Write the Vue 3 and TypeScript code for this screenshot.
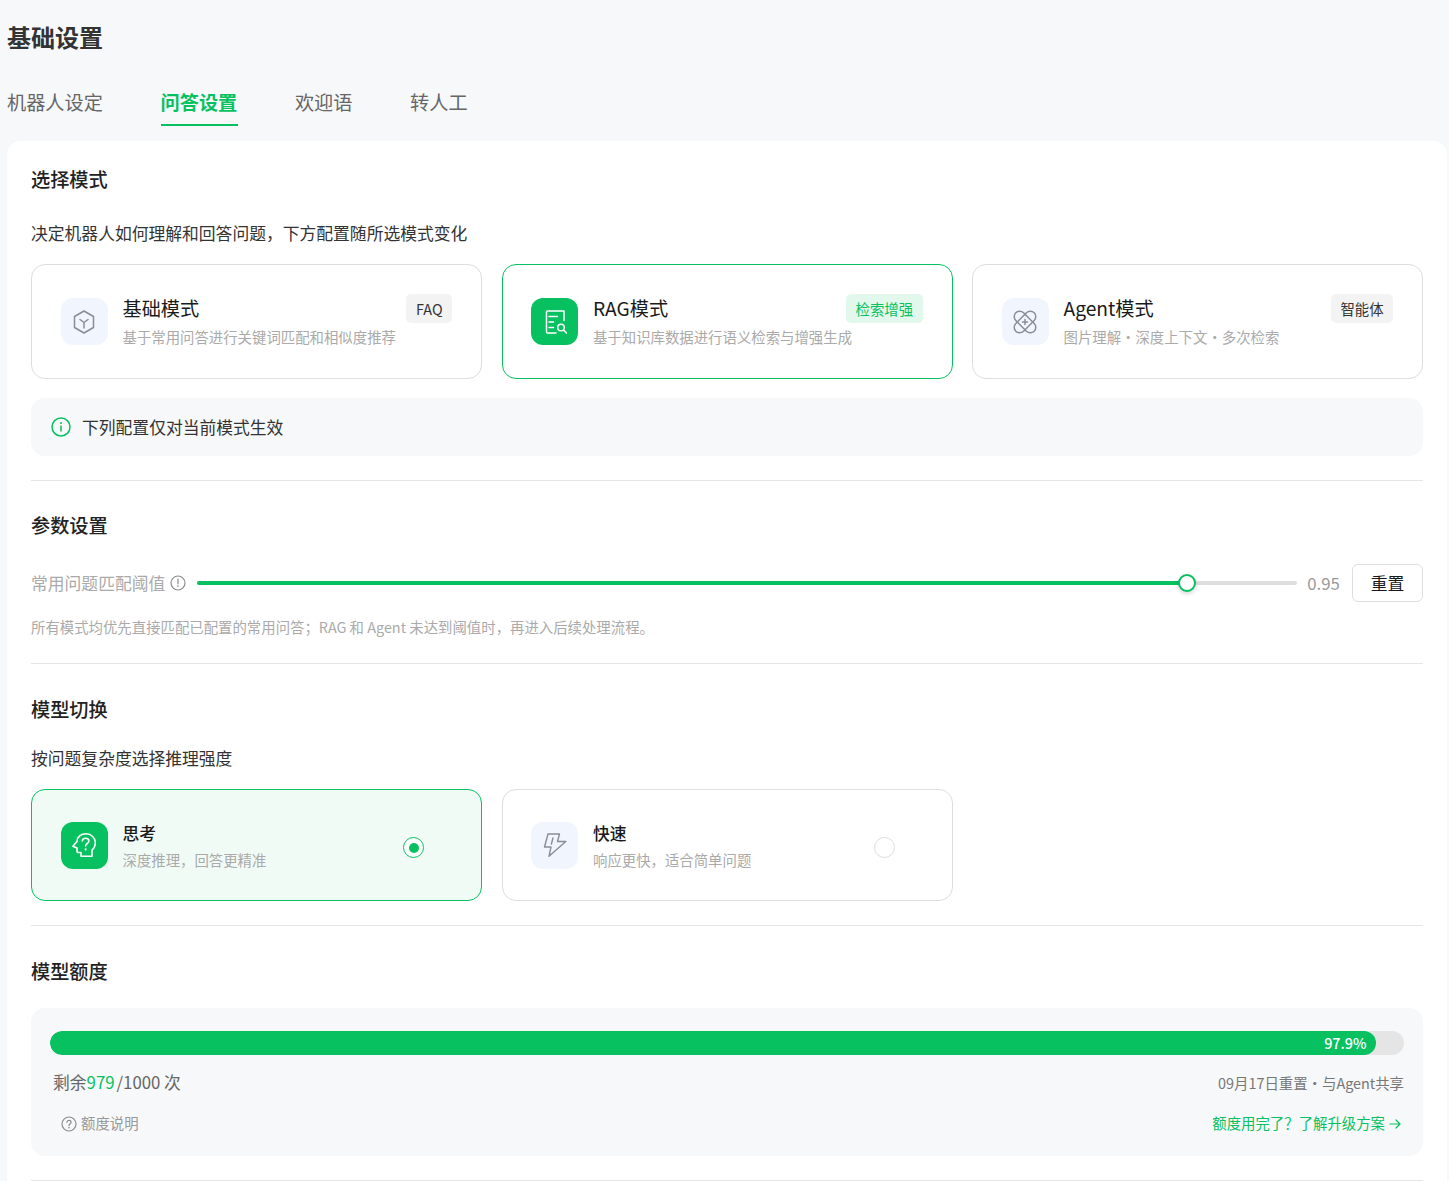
<script setup lang="ts">
const tabs = ["机器人设定", "问答设置", "欢迎语", "转人工"];

const modes = [
  { key: "basic", title: "基础模式", desc: "基于常用问答进行关键词匹配和相似度推荐", tag: "FAQ", active: false },
  { key: "rag", title: "RAG模式", desc: "基于知识库数据进行语义检索与增强生成", tag: "检索增强", active: true },
  { key: "agent", title: "Agent模式", desc: "图片理解・深度上下文・多次检索", tag: "智能体", active: false },
];

const models = [
  { key: "think", title: "思考", desc: "深度推理，回答更精准", active: true },
  { key: "fast", title: "快速", desc: "响应更快，适合简单问题", active: false },
];

const threshold = 0.95;
const used = 97.9;
</script>

<template>
  <div class="page">
    <h1 class="page-title">基础设置</h1>
    <nav class="tabs">
      <span v-for="(t, i) in tabs" :key="t" class="tab" :class="{ on: i === 1 }">{{ t }}</span>
    </nav>

    <main class="panel">
      <section class="sec first">
        <h2>选择模式</h2>
        <p class="lead">决定机器人如何理解和回答问题，下方配置随所选模式变化</p>
        <div class="mode-grid">
          <div v-for="m in modes" :key="m.key" class="mode" :class="{ on: m.active }">
            <div class="ico">
              <svg v-if="m.key === 'basic'" viewBox="0 0 24 24" width="24" height="24" fill="none" stroke="currentColor" stroke-width="1.5" stroke-linejoin="round" stroke-linecap="round">
                <path d="M12 1 21.500 6.500v11L12 23l-9.500-5.500v-11z" />
                <path d="M8 9.500l4 3 4-3M12 12.500V18" />
              </svg>
              <svg v-else-if="m.key === 'rag'" viewBox="0 0 24 24" width="24" height="24" fill="none" stroke="currentColor" stroke-width="1.500" stroke-linejoin="round" stroke-linecap="round">
                <path d="M21 10.500V1H4.500a1 1 0 0 0-1 1v20a1 1 0 0 0 1 1H13" />
                <path d="M6 6.500h8.500M6 12h4.500M6 17.500h4.500" />
                <circle cx="18" cy="17.500" r="3.300" />
                <path d="m20.500 20 3 3" />
              </svg>
              <svg v-else viewBox="0 0 24 24" width="24" height="24" fill="none" stroke="currentColor" stroke-width="1.500" stroke-linejoin="round" stroke-linecap="round">
                <rect x="-1" y="6.500" width="26" height="11" rx="5.500" transform="rotate(45 12 12)" />
                <rect x="-1" y="6.500" width="26" height="11" rx="5.500" transform="rotate(-45 12 12)" />
                <path d="M12 9.500v5M9.500 12h5" />
              </svg>
            </div>
            <div class="mode-text">
              <div class="mode-title">{{ m.title }}</div>
              <div class="mode-desc">{{ m.desc }}</div>
            </div>
            <span class="tag">{{ m.tag }}</span>
          </div>
        </div>
        <div class="tip">
          <svg viewBox="0 0 20 20" width="20" height="20" fill="none" stroke="#07c160" stroke-width="1.500" stroke-linecap="round">
            <circle cx="10" cy="10" r="9" />
            <path d="M10 9v5" />
            <path d="M10 6v.2" stroke-width="1.800" />
          </svg>
          <span>下列配置仅对当前模式生效</span>
        </div>
      </section>

      <section class="sec params">
        <h2>参数设置</h2>
        <div class="slider-row">
          <span class="slider-label">常用问题匹配阈值</span>
          <svg class="hint" viewBox="0 0 16 16" width="16" height="16" fill="none" stroke="#8c8c8c" stroke-width="1.200" stroke-linecap="round">
            <circle cx="8" cy="8" r="7" />
            <path d="M8 4.200v4.600" />
            <path d="M8 11v.2" stroke-width="1.500" />
          </svg>
          <div class="track">
            <div class="fill" :style="{ width: '90%' }"></div>
            <div class="thumb" :style="{ left: '90%' }"></div>
          </div>
          <span class="value">{{ threshold }}</span>
          <button class="reset">重置</button>
        </div>
        <p class="note">所有模式均优先直接匹配已配置的常用问答；RAG 和 Agent 未达到阈值时，再进入后续处理流程。</p>
      </section>

      <section class="sec models">
        <h2>模型切换</h2>
        <p class="lead">按问题复杂度选择推理强度</p>
        <div class="mode-grid">
          <div v-for="m in models" :key="m.key" class="mode model" :class="{ on: m.active }">
            <div class="ico">
              <svg v-if="m.key === 'think'" viewBox="0 0 24 24" width="24" height="24" fill="none" stroke="currentColor" stroke-width="1.600" stroke-linejoin="round" stroke-linecap="round">
                <path d="M9 23.200v-3.700H6a1 1 0 0 1-1-1V15L.9 13.300 5 8.500C5 3.800 9 .8 14 .8c5.400 0 9.300 4 9.300 9.200 0 3.200-1.300 5.500-3.300 7.200v6z" />
                <path d="M10.300 7.800c.3-1.600 1.600-2.600 3.300-2.600 1.900 0 3.300 1.100 3.300 2.800 0 2.500-3.300 2.500-3.300 4.900" />
                <path d="M13.600 16.200v.2" stroke-width="2" />
              </svg>
              <svg v-else viewBox="0 0 24 24" width="24" height="24" fill="none" stroke="currentColor" stroke-width="1.400" stroke-linejoin="round" stroke-linecap="round">
                <path d="M5 1h11.500l-2 7.500h8.300L6 23.300 8 14H1.500z" />
                <path d="M10 5 8.400 11" />
              </svg>
            </div>
            <div class="mode-text">
              <div class="model-title">{{ m.title }}</div>
              <div class="mode-desc">{{ m.desc }}</div>
            </div>
            <span class="radio"><i v-if="m.active"></i></span>
          </div>
        </div>
      </section>

      <section class="sec quota-sec">
        <h2>模型额度</h2>
        <div class="quota">
          <div class="bar">
            <div class="bar-fill" :style="{ width: used + '%' }">{{ used }}%</div>
          </div>
          <div class="quota-row">
            <span class="left">剩余<b>979</b>/1000 次</span>
            <span class="right">09月17日重置・与Agent共享</span>
          </div>
          <div class="quota-foot">
            <span class="help">
              <svg viewBox="0 0 16 16" width="16" height="16" fill="none" stroke="#8c8c8c" stroke-width="1.200" stroke-linecap="round">
                <circle cx="8" cy="8" r="7" />
                <path d="M5.900 6.300C6 5 6.900 4.300 8 4.300c1.200 0 2.100.8 2.100 1.900 0 1.500-2.100 1.500-2.100 3.200" />
                <path d="M8 11.500v.2" stroke-width="1.500" />
              </svg>
              额度说明
            </span>
            <span class="upgrade">
              额度用完了？了解升级方案
              <svg viewBox="0 0 12 12" width="12" height="12" fill="none" stroke="#07c160" stroke-width="1.200" stroke-linecap="round" stroke-linejoin="round">
                <path d="M1 6h10M7 2l4 4-4 4" />
              </svg>
            </span>
          </div>
        </div>
      </section>
    </main>
  </div>
</template>

<style>
html,
body {
  margin: 0;
  background: #f7f8fa;
}
</style>

<style scoped>
.page {
  height: 1181px;
  overflow: hidden;
  box-sizing: border-box;
  padding: 0 2px 0 7px;
  background: #f7f8fa;
  font-family: "Noto Sans CJK SC", "Noto Sans", sans-serif;
  color: #1a1a1a;
}

.page-title {
  margin: 0;
  padding-top: 20px;
  font-size: 24px;
  line-height: 34px;
  font-weight: 700;
  color: #333;
}

.tabs {
  display: flex;
  gap: 57.600px;
  margin-top: 34px;
}

.tab {
  position: relative;
  font-size: 19.200px;
  line-height: 28px;
  padding: 0 0 10px;
  color: #666;
}

.tab.on {
  color: #07c160;
  font-weight: 700;
}

.tab.on::after {
  content: "";
  position: absolute;
  left: 0;
  right: -1px;
  bottom: 0;
  height: 2px;
  background: #07c160;
}

.panel {
  margin-top: 15px;
  padding: 0 24px;
  height: 1100px;
  background: #fff;
  border-radius: 14px 14px 0 0;
}

.sec {
  border-bottom: 1px solid #e6e6e6;
}

h2 {
  margin: 0;
  font-size: 19.200px;
  line-height: 28px;
  font-weight: 500;
  color: #222;
}

.first {
  padding: 24px 0;
  height: 340px;
  box-sizing: border-box;
}

.lead {
  margin: 26px 0 0;
  font-size: 16.800px;
  line-height: 28px;
  color: #333;
}

.mode-grid {
  display: grid;
  grid-template-columns: repeat(3, 1fr);
  gap: 19.500px;
  margin-top: 17px;
}

.mode {
  display: flex;
  align-items: center;
  height: 115px;
  box-sizing: border-box;
  padding: 0 29px 0 28.900px;
  border: 1px solid #ddd;
  border-radius: 14px;
  background: #fff;
  position: relative;
}

.mode.on {
  border-color: #07c160;
}

.model {
  height: 112px;
}

.model.on {
  background: #f1fbf6;
}

.ico {
  flex: none;
  width: 47px;
  height: 47px;
  border-radius: 12px;
  display: flex;
  align-items: center;
  justify-content: center;
  background: #f1f5fd;
  color: #8a8d94;
}

.on .ico {
  background: #07c160;
  color: #fff;
}

.mode-text {
  flex: 1;
  min-width: 0;
  margin-left: 14.600px;
  padding-bottom: 2px;
}

.model .mode-text {
  padding: 2px 0 0;
}

.mode-title {
  font-size: 19.200px;
  line-height: 28px;
  font-weight: 400;
  color: #1a1a1a;
}

.model-title {
  font-size: 16.800px;
  line-height: 24px;
  font-weight: 500;
  color: #1a1a1a;
}

.mode-desc {
  margin-top: 4px;
  font-size: 14.400px;
  line-height: 22px;
  color: #aaa;
  white-space: nowrap;
}

.tag {
  position: absolute;
  top: 29px;
  right: 28.800px;
  height: 29px;
  padding: 0 9.600px;
  border-radius: 5px;
  font-size: 14.400px;
  line-height: 29px;
  background: #f3f3f3;
  color: #333;
}

.on .tag {
  background: #e3f8ec;
  color: #07c160;
}

.radio {
  flex: none;
  box-sizing: border-box;
  width: 21px;
  height: 21px;
  margin: 5px 28px 0 0;
  border: 1px solid #ddd;
  border-radius: 50%;
  background: #fff;
  display: flex;
  align-items: center;
  justify-content: center;
}

.model.on .radio {
  border-color: #07c160;
}

.radio i {
  width: 10px;
  height: 10px;
  border-radius: 50%;
  background: #07c160;
}

.tip {
  display: flex;
  align-items: center;
  gap: 11px;
  height: 58px;
  margin-top: 19px;
  padding-left: 20px;
  border-radius: 14px;
  background: #f7f8fa;
  font-size: 16.800px;
  color: #333;
}

.params {
  height: 183px;
  box-sizing: border-box;
  padding-top: 30px;
}

.slider-row {
  display: flex;
  align-items: center;
  margin-top: 25px;
  height: 38px;
}

.slider-label {
  font-size: 16.800px;
  color: #aaa;
}

.hint {
  margin-left: 5px;
}

.track {
  position: relative;
  flex: none;
  width: 1100px;
  height: 4px;
  margin-left: 11px;
  border-radius: 2px;
  background: #dedede;
}

.fill {
  height: 100%;
  border-radius: 2px;
  background: #07c160;
}

.thumb {
  position: absolute;
  top: -7px;
  box-sizing: border-box;
  width: 18px;
  height: 18px;
  margin-left: -9px;
  border: 2px solid #07c160;
  border-radius: 50%;
  background: #fff;
  box-shadow: 0 2px 4px rgba(0, 0, 0, 0.16);
}

.value {
  margin-left: 10px;
  font-size: 16.800px;
  color: #999;
}

.reset {
  margin-left: auto;
  width: 71px;
  height: 38px;
  box-sizing: border-box;
  padding: 0;
  border: 1px solid #ddd;
  border-radius: 6px;
  background: #fff;
  font: inherit;
  font-size: 16.800px;
  color: #1a1a1a;
}

.note {
  margin: 14px 0 0;
  font-size: 14.400px;
  line-height: 22px;
  color: #aaa;
}

.models {
  height: 262px;
  box-sizing: border-box;
  padding-top: 31px;
}

.models .lead {
  margin-top: 21px;
}

.quota-sec {
  padding-top: 31px;
  height: 255px;
  box-sizing: border-box;
}

.quota {
  margin-top: 23px;
  height: 148px;
  box-sizing: border-box;
  padding: 23px 19px 0;
  border-radius: 14px;
  background: #f7f8fa;
}

.bar {
  height: 24px;
  border-radius: 12px;
  background: #e5e5e5;
  overflow: hidden;
}

.bar-fill {
  height: 100%;
  box-sizing: border-box;
  padding-right: 9px;
  border-radius: 12px;
  background: #07c160;
  color: #fff;
  font-size: 14.400px;
  font-weight: 500;
  line-height: 24px;
  text-align: right;
}

.quota-row {
  display: flex;
  justify-content: space-between;
  align-items: center;
  margin-top: 13px;
  padding-left: 3px;
  height: 28px;
}

.left {
  font-size: 16.800px;
  color: #666;
}

.left b {
  margin-right: 2px;
  font-weight: 400;
  color: #07c160;
}

.right {
  font-size: 14.400px;
  color: #777;
}

.quota-foot {
  display: flex;
  justify-content: space-between;
  align-items: center;
  margin-top: 12px;
  height: 28px;
  font-size: 14.400px;
}

.help {
  display: flex;
  align-items: center;
  gap: 4px;
  padding-left: 11px;
  color: #999;
}

.upgrade {
  display: flex;
  align-items: center;
  gap: 4px;
  padding-right: 3px;
  color: #07c160;
}

.quota-foot svg {
  margin-top: 3px;
}
</style>
